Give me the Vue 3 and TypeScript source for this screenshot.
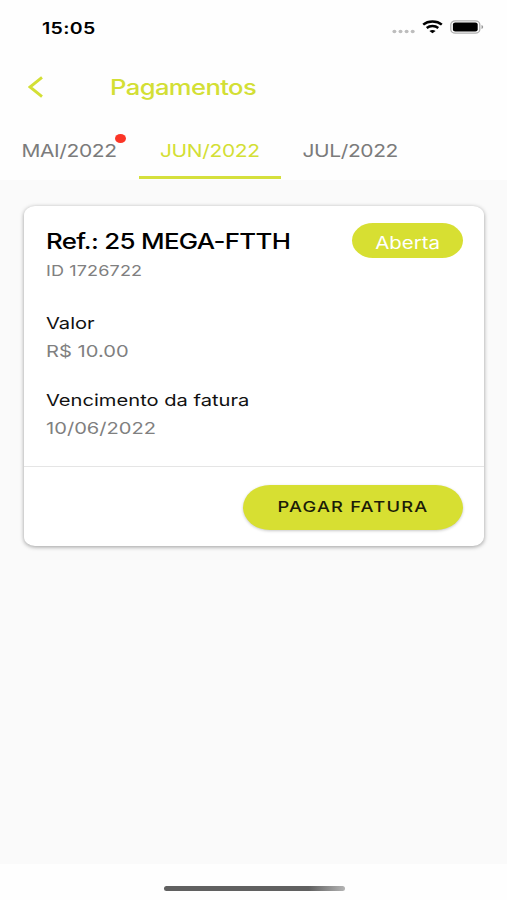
<script setup lang="ts">
import { ref } from 'vue'

interface Invoice {
  month: string
  overdue: boolean
  plan: string
  id: string
  status: string
  amount: string
  due: string
}

const invoices: Invoice[] = [
  { month: 'MAI/2022', overdue: true, plan: '25 MEGA-FTTH', id: '1726722', status: 'Aberta', amount: 'R$ 10.00', due: '10/05/2022' },
  { month: 'JUN/2022', overdue: false, plan: '25 MEGA-FTTH', id: '1726722', status: 'Aberta', amount: 'R$ 10.00', due: '10/06/2022' },
  { month: 'JUL/2022', overdue: false, plan: '25 MEGA-FTTH', id: '1726722', status: 'Aberta', amount: 'R$ 10.00', due: '10/07/2022' },
]

const active = ref(1)
</script>

<template>
  <div class="screen">
    <div class="status">
      <span class="wide time">15:05</span>
      <div class="signals">
        <svg class="dots" width="23" height="5" viewBox="0 0 23 5">
          <ellipse v-for="n in 4" :key="n" :cx="n * 6.1 - 3.7" cy="2.5" rx="2" ry="1.7" fill="#bdbdbd" />
        </svg>
        <svg class="wifi" width="21" height="14" viewBox="0 0 21 14" fill="none" stroke="#000">
          <path d="M1.2 4.6C6.2.4 14.8.4 19.8 4.6" stroke-width="2.5" />
          <path d="M4.7 8C7.9 5.3 13.1 5.3 16.3 8" stroke-width="2.3" />
          <path d="M10.5 13.2L7.4 10.9Q10.5 8.9 13.6 10.9Z" fill="#000" stroke="none" />
        </svg>
        <svg class="battery" width="34" height="14" viewBox="0 0 34 14">
          <rect x=".8" y=".9" width="29" height="12.2" rx="4.4" ry="3.7" fill="#fff" stroke="#b0b0b0" stroke-width="1.3" />
          <rect x="2.9" y="2.6" width="24.8" height="8.9" rx="2.3" ry="1.9" fill="#000" />
          <path d="M31.5 5Q33.2 5.6 33.2 7T31.5 9Z" fill="#999" />
        </svg>
      </div>
    </div>

    <header class="header">
      <svg class="back" width="16" height="22" viewBox="0 0 16 22" fill="none" stroke="#d3df35" stroke-width="2.9">
        <path d="M14 1.4L2 11L14 20.6" />
      </svg>
      <h1 class="wide title">Pagamentos</h1>
    </header>

    <nav class="tabs">
      <button
        v-for="(invoice, i) in invoices"
        :key="invoice.month"
        class="tab"
        :class="{ active: i === active }"
        @click="active = i"
      >
        <span class="wide tab-label">{{ invoice.month }}</span>
        <i v-if="invoice.overdue" class="alert"></i>
      </button>
    </nav>

    <main class="content">
      <article class="card">
        <div class="details">
          <div class="top">
            <div>
              <h2 class="wide plan">Ref.: {{ invoices[active].plan }}</h2>
              <p class="wide ident">ID {{ invoices[active].id }}</p>
            </div>
            <div class="badge"><span class="wide">{{ invoices[active].status }}</span></div>
          </div>
          <div class="field amount">
            <p class="wide label">Valor</p>
            <p class="wide value">{{ invoices[active].amount }}</p>
          </div>
          <div class="field due">
            <p class="wide label">Vencimento da fatura</p>
            <p class="wide value">{{ invoices[active].due }}</p>
          </div>
        </div>
        <div class="actions">
          <button class="pay"><span class="wide">PAGAR FATURA</span></button>
        </div>
      </article>
    </main>

    <footer class="home"><div class="indicator"></div></footer>
  </div>
</template>

<style>
body {
  background: #fff;
}
</style>

<style scoped>
.screen {
  width: 507px;
  height: 900px;
  display: flex;
  flex-direction: column;
  overflow: hidden;
  background: #fefefe;
  font-family: Inter, "Liberation Sans", sans-serif;
  color: #111;
}
h1, h2, p {
  margin: 0;
  font-weight: 400;
}
button {
  border: 0;
  padding: 0;
  background: none;
  font: inherit;
  color: inherit;
}
.wide {
  display: block;
  width: max-content;
  white-space: nowrap;
  transform: scaleX(1.22);
  transform-origin: left center;
}
.status {
  height: 55px;
  flex: none;
  display: flex;
  align-items: center;
  justify-content: space-between;
  padding: 0 23px 0 41.5px;
}
.time {
  font-size: 16px;
  font-weight: 600;
  letter-spacing: 0.3px;
  color: #000;
}
.signals {
  display: flex;
  align-items: center;
  margin-top: -1px;
}
.dots {
  margin: 8px 7px 0 0;
}
.wifi {
  margin-right: 7px;
}
.header {
  height: 65px;
  flex: none;
  display: flex;
  align-items: center;
  padding-left: 27.5px;
}
.back {
  margin-top: -1px;
}
.title {
  margin-left: 66.5px;
  font-size: 21px;
  font-weight: 500;
  letter-spacing: -0.5px;
  color: #d3df35;
}
.tabs {
  height: 60px;
  flex: none;
  display: grid;
  grid-template-columns: 139px 142px 139px;
}
.tab {
  position: relative;
  display: flex;
  justify-content: center;
  align-items: center;
  margin-bottom: 1px;
  padding-top: 3px;
  border-bottom: 3px solid transparent;
  color: #7b7b7b;
}
.tab.active {
  color: #d3df35;
  border-bottom-color: #d5e03c;
}
.tab-label {
  margin-top: 1px;
  font-size: 17.2px;
  letter-spacing: -0.3px;
  transform-origin: center;
}
.alert {
  position: absolute;
  top: 14px;
  left: 115px;
  width: 11px;
  height: 9px;
  border-radius: 50%;
  background: #fb3526;
}
.content {
  flex: none;
  height: 684px;
  box-sizing: border-box;
  padding: 26px 23px 0 24px;
  background: #fafafa;
}
.card {
  background: #fff;
  border-radius: 11px / 9px;
  box-shadow: 0 1px 4px rgba(0, 0, 0, 0.38);
}
.details {
  height: 260px;
  box-sizing: border-box;
  padding: 17px 21px 0 21.5px;
}
.top {
  display: flex;
  justify-content: space-between;
  align-items: flex-start;
}
.plan {
  margin-top: 3px;
  line-height: 30px;
  font-size: 21.2px;
  font-weight: 500;
  letter-spacing: -0.57px;
  color: #000;
}
.ident {
  margin-top: 1px;
  line-height: 28px;
  font-size: 14.8px;
  letter-spacing: 0.1px;
  color: #808080;
}
.badge {
  width: 111px;
  height: 35px;
  box-sizing: border-box;
  padding-top: 4px;
  display: flex;
  align-items: center;
  justify-content: center;
  border-radius: 21px / 17.5px;
  background: #d7df32;
  color: #fff;
  font-size: 16.8px;
}
.badge .wide,
.pay .wide {
  transform-origin: center;
}
.field {
  line-height: 28px;
  font-size: 16.5px;
}
.amount {
  margin-top: 24px;
}
.due {
  margin-top: 21px;
}
.value {
  color: #808080;
}
.actions {
  height: 80px;
  box-sizing: border-box;
  border-top: 1px solid #e5e5e5;
  padding: 18px 21px 0 0;
  display: flex;
  justify-content: flex-end;
}
.pay {
  width: 220px;
  height: 45px;
  box-sizing: border-box;
  padding: 0 0 2px;
  display: flex;
  align-items: center;
  justify-content: center;
  border-radius: 27px / 22.5px;
  background: #d7df32;
  box-shadow: 0 1px 3px rgba(0, 0, 0, 0.22);
  color: #1c1c08;
  font-size: 15px;
  font-weight: 550;
  letter-spacing: 1px;
}
.home {
  flex: 1;
  display: flex;
  justify-content: center;
  padding: 22px 0 0 1px;
}
.indicator {
  width: 181px;
  height: 5px;
  border-radius: 3px;
  background: linear-gradient(90deg, #606060 80%, #b4b4b4);
}
</style>
